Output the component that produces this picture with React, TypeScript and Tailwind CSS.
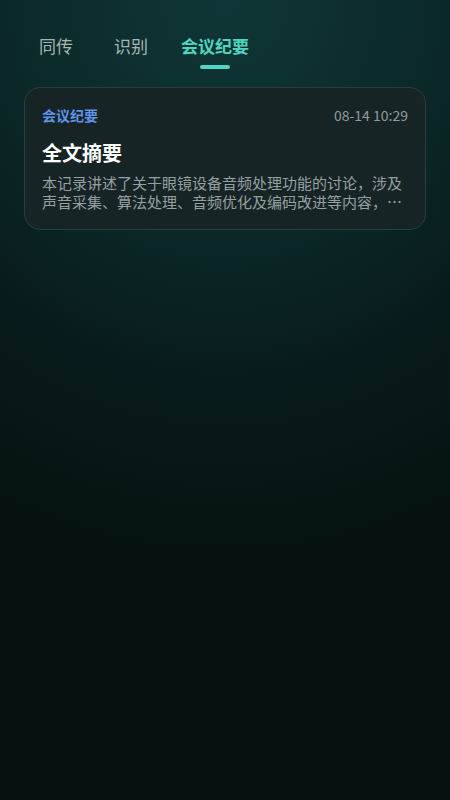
export default function App() {
  const tabs = [
    { label: "同传", cls: "" },
    { label: "识别", cls: "ml-[41px]" },
    { label: "会议纪要", cls: "ml-[33px]" },
  ]
  const active = 2
  return (
    <div className="relative h-[800px] w-[450px] overflow-hidden bg-[#061212] [font-family:'Noto_Sans_CJK_SC','Roboto',sans-serif]">
      <div className="pointer-events-none absolute inset-0 bg-[radial-gradient(ellipse_520px_560px_at_50%_0%,#0f3636_0%,#0c2b2b_35%,#08191a_72%,#061212_100%)]" />
      <div className="relative">
        <div className="flex items-start px-[39px] pt-[33px]">
          {tabs.map((t, i) => (
            <div key={t.label} className={`flex flex-col items-center ${t.cls}`}>
              <span
                className={
                  i === active
                    ? "text-[17px] leading-[26px] font-bold text-[#4fd6c3]"
                    : "text-[17px] leading-[26px] text-[#a7b6b4]"
                }
              >
                {t.label}
              </span>
              {i === active && (
                <span className="mt-[6px] h-[4px] w-[30px] rounded-full bg-[#4fd6c3]" />
              )}
            </div>
          ))}
        </div>

        <div className="mx-[24px] mt-[18px] rounded-[16px] border border-[#2b3d3d] bg-[#162426] px-[17px] pt-[17px] pb-[18px]">
          <div className="flex items-center justify-between">
            <span className="text-[14px] leading-[20px] font-bold text-[#5f93e6]">
              会议纪要
            </span>
            <span className="text-[14px] leading-[20px] text-[#8e9c9c]">
              08-14 10:29
            </span>
          </div>
          <div className="mt-[14px] text-[20px] leading-[28px] font-bold text-white">
            全文摘要
          </div>
          <p className="mt-[6px] line-clamp-2 text-[15px] leading-[19px] text-[#95a1a1]">
            本记录讲述了关于眼镜设备音频处理功能的讨论，涉及声音采集、算法处理、音频优化及编码改进等内容，以及后续的测试安排与人员分工。
          </p>
        </div>
      </div>
    </div>
  )
}
